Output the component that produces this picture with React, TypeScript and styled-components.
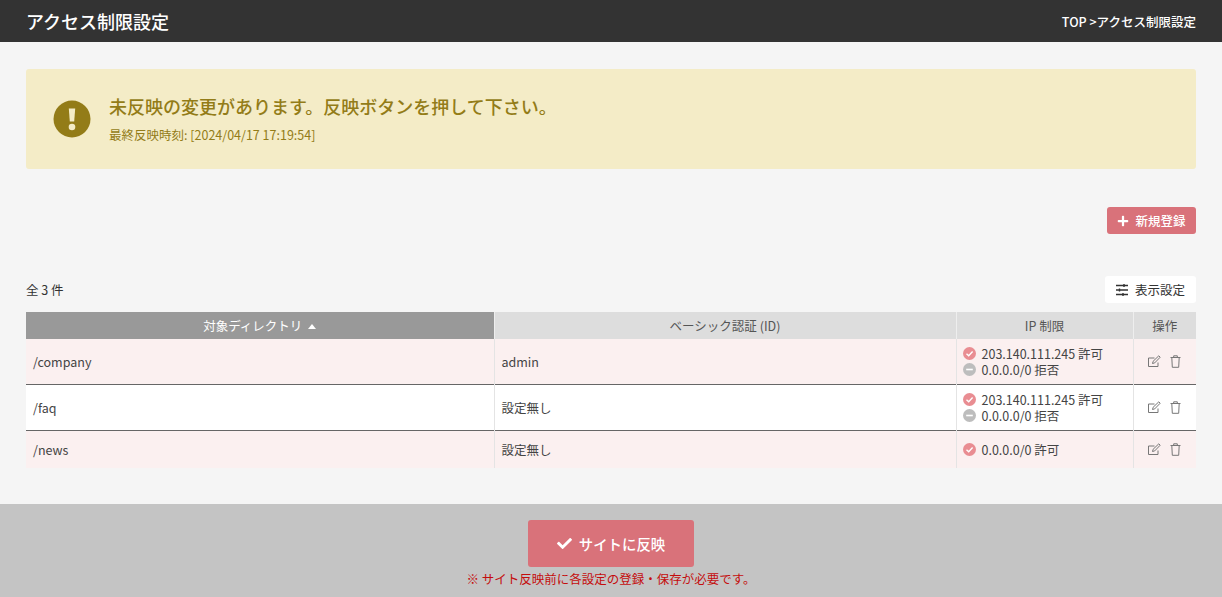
import styled, { createGlobalStyle } from 'styled-components';
import { FaCheck, FaPlus } from 'react-icons/fa';

const GlobalStyle = createGlobalStyle`
  html, body {
    margin: 0;
    padding: 0;
    background: #f5f5f5;
  }
  * {
    box-sizing: border-box;
  }
  body {
    font-family: "Noto Sans CJK JP", "Noto Sans", sans-serif;
    color: #333;
  }
`;

const Page = styled.div`
  width: 1222px;
  height: 597px;
  display: flex;
  flex-direction: column;
  overflow: hidden;
`;

const Header = styled.header`
  height: 42px;
  flex: none;
  background: #333;
  color: #fff;
  display: flex;
  align-items: center;
  justify-content: space-between;
  padding: 0 26px;
`;

const PageTitle = styled.h1`
  margin: 0;
  font-size: 18px;
  font-weight: 500;
`;

const Breadcrumb = styled.div`
  font-size: 12.5px;
  font-weight: 500;
`;

const Main = styled.main`
  flex: 1;
  padding: 27px 26px 0;
`;

const Alert = styled.div`
  height: 100px;
  background: #f4ecc7;
  border-radius: 3px;
  color: #937c18;
  display: flex;
  align-items: center;
  gap: 18px;
  padding-left: 27px;
`;

const AlertTitle = styled.div`
  font-size: 18px;
  font-weight: 500;
  line-height: 24px;
`;

const AlertTime = styled.div`
  font-size: 12.5px;
  line-height: 18px;
  margin-top: 8px;
`;

const ActionRow = styled.div`
  display: flex;
  justify-content: flex-end;
  margin-top: 38px;
`;

const NewButton = styled.button`
  width: 89px;
  height: 27px;
  border: none;
  border-radius: 3px;
  background: #d9727a;
  color: #fff;
  font: 500 12.5px "Noto Sans CJK JP", sans-serif;
  display: flex;
  align-items: center;
  justify-content: center;
  gap: 6px;
  padding: 0;
`;

const ListBar = styled.div`
  display: flex;
  align-items: center;
  justify-content: space-between;
  margin-top: 42px;
  height: 27px;
  font-size: 12.5px;
`;

const SettingsButton = styled.button`
  width: 91px;
  height: 27px;
  border: none;
  border-radius: 3px;
  background: #fff;
  color: #333;
  font: 400 12.5px "Noto Sans CJK JP", sans-serif;
  display: flex;
  align-items: center;
  justify-content: center;
  gap: 7px;
  padding: 0;
`;

const Table = styled.table`
  width: 1170px;
  margin-top: 9px;
  border-collapse: collapse;
  table-layout: fixed;
  font-size: 12.5px;
`;

const HeadCell = styled.th<{ $active?: boolean }>`
  height: 27px;
  padding: 0;
  font-weight: 400;
  text-align: center;
  background: ${(p) => (p.$active ? '#999' : '#ddd')};
  color: ${(p) => (p.$active ? '#fff' : '#555')};
  border-left: 1px solid #eee;
  &:first-child {
    border-left: none;
  }
`;

const SortMark = styled.svg`
  margin-left: 6px;
  vertical-align: 2px;
`;

const Row = styled.tr<{ $height: number; $tinted: boolean; $last?: boolean }>`
  height: ${(p) => p.$height}px;
  background: ${(p) => (p.$tinted ? '#fbf0f0' : '#fff')};
  border-bottom: ${(p) => (p.$last ? 'none' : '1px solid #666')};
`;

const Cell = styled.td`
  padding: 0 7px;
  vertical-align: middle;
  color: #444;
  border-left: 1px solid #e4e4e4;
  &:first-child {
    border-left: none;
  }
`;

const IpCell = styled(Cell)`
  padding: 1px 7px 0 6px;
`;

const IpLine = styled.div`
  display: flex;
  align-items: center;
  gap: 6px;
  height: 16px;
  line-height: 16px;
`;

const IconCell = styled.div`
  display: flex;
  align-items: center;
  justify-content: center;
  gap: 9px;
  color: #777;
`;

const Footer = styled.footer`
  height: 93px;
  flex: none;
  background: #c4c4c4;
  display: flex;
  flex-direction: column;
  align-items: center;
  padding-top: 16px;
`;

const PublishButton = styled.button`
  width: 166px;
  height: 47px;
  border: none;
  border-radius: 3px;
  background: #d9727a;
  color: #fff;
  font: 500 14.4px "Noto Sans CJK JP", sans-serif;
  display: flex;
  align-items: center;
  justify-content: center;
  gap: 7px;
  padding: 0;
`;

const FootNote = styled.p`
  margin: 3px 0 0;
  font-size: 12.5px;
  line-height: 18px;
  color: #c40d0d;
`;

const AlertIcon = () => (
  <svg width="38" height="38" viewBox="0 0 38 38">
    <circle cx="19" cy="19" r="18.5" fill="#937c18" />
    <path d="M15.8 8.5h6.4l-1 13h-4.4z" fill="#f4ecc7" />
    <circle cx="19" cy="27" r="3.3" fill="#f4ecc7" />
  </svg>
);

const SettingsIcon = () => (
  <svg width="12" height="12" viewBox="0 0 12 12" fill="none" stroke="#333" strokeWidth="1.4">
    <path d="M0 1.500h12M0 6h12M0 10.500h12" />
    <path d="M8 0v3M3.500 4.500v3M7 9v3" />
  </svg>
);

const AllowIcon = () => (
  <svg width="13" height="13" viewBox="0 0 13 13">
    <circle cx="6.500" cy="6.500" r="6.500" fill="#e98d92" />
    <path d="M3.500 6.700l2.200 2.100 3.900-4.200" fill="none" stroke="#fff" strokeWidth="1.4" />
  </svg>
);

const DenyIcon = () => (
  <svg width="13" height="13" viewBox="0 0 13 13">
    <circle cx="6.500" cy="6.500" r="6.500" fill="#bdbdbd" />
    <rect x="3.200" y="5.700" width="6.600" height="1.600" fill="#fff" />
  </svg>
);

const EditIcon = () => (
  <svg width="13" height="13" viewBox="0 0 13 13" fill="none" stroke="currentColor" strokeWidth="1">
    <path d="M10 7.500v4H.5V3h6" />
    <path d="M4.500 8.500l.6-2.200L10.800 .8l1.400 1.400L6.700 7.900z" />
  </svg>
);

const TrashIcon = () => (
  <svg width="11" height="13" viewBox="0 0 11 13" fill="none" stroke="currentColor" strokeWidth="1">
    <path d="M.5 2.500h10M3.700 2.500V.8h3.600v1.700" />
    <path d="M1.800 2.500l.5 9.800h6.400l.5-9.800" />
  </svg>
);

type IpRule = { label: string; allow: boolean };

type Directory = {
  path: string;
  basic: string;
  height: number;
  rules: IpRule[];
};

const directories: Directory[] = [
  {
    path: '/company',
    basic: 'admin',
    height: 45,
    rules: [
      { label: '203.140.111.245 許可', allow: true },
      { label: '0.0.0.0/0 拒否', allow: false },
    ],
  },
  {
    path: '/faq',
    basic: '設定無し',
    height: 46,
    rules: [
      { label: '203.140.111.245 許可', allow: true },
      { label: '0.0.0.0/0 拒否', allow: false },
    ],
  },
  {
    path: '/news',
    basic: '設定無し',
    height: 38,
    rules: [{ label: '0.0.0.0/0 許可', allow: true }],
  },
];

export default function App() {
  return (
    <Page>
      <GlobalStyle />
      <Header>
        <PageTitle>アクセス制限設定</PageTitle>
        <Breadcrumb>TOP &gt;アクセス制限設定</Breadcrumb>
      </Header>
      <Main>
        <Alert>
          <AlertIcon />
          <div>
            <AlertTitle>未反映の変更があります。反映ボタンを押して下さい。</AlertTitle>
            <AlertTime>最終反映時刻: [2024/04/17 17:19:54]</AlertTime>
          </div>
        </Alert>
        <ActionRow>
          <NewButton>
            <FaPlus size={12} />
            新規登録
          </NewButton>
        </ActionRow>
        <ListBar>
          <span>全 3 件</span>
          <SettingsButton>
            <SettingsIcon />
            表示設定
          </SettingsButton>
        </ListBar>
        <Table>
          <colgroup>
            <col width="468" />
            <col width="462" />
            <col width="177" />
            <col width="63" />
          </colgroup>
          <thead>
            <tr>
              <HeadCell $active>
                対象ディレクトリ
                <SortMark width="8" height="5" viewBox="0 0 8 5">
                  <path d="M4 0l4 5H0z" fill="#fff" />
                </SortMark>
              </HeadCell>
              <HeadCell>ベーシック認証 (ID)</HeadCell>
              <HeadCell>IP 制限</HeadCell>
              <HeadCell>操作</HeadCell>
            </tr>
          </thead>
          <tbody>
            {directories.map((dir, i) => (
              <Row
                key={dir.path}
                $height={dir.height}
                $tinted={i % 2 === 0}
                $last={i === directories.length - 1}
              >
                <Cell>{dir.path}</Cell>
                <Cell>{dir.basic}</Cell>
                <IpCell>
                  {dir.rules.map((rule) => (
                    <IpLine key={rule.label}>
                      {rule.allow ? <AllowIcon /> : <DenyIcon />}
                      {rule.label}
                    </IpLine>
                  ))}
                </IpCell>
                <Cell>
                  <IconCell>
                    <EditIcon />
                    <TrashIcon />
                  </IconCell>
                </Cell>
              </Row>
            ))}
          </tbody>
        </Table>
      </Main>
      <Footer>
        <PublishButton>
          <FaCheck size={15} />
          サイトに反映
        </PublishButton>
        <FootNote>※ サイト反映前に各設定の登録・保存が必要です。</FootNote>
      </Footer>
    </Page>
  );
}
